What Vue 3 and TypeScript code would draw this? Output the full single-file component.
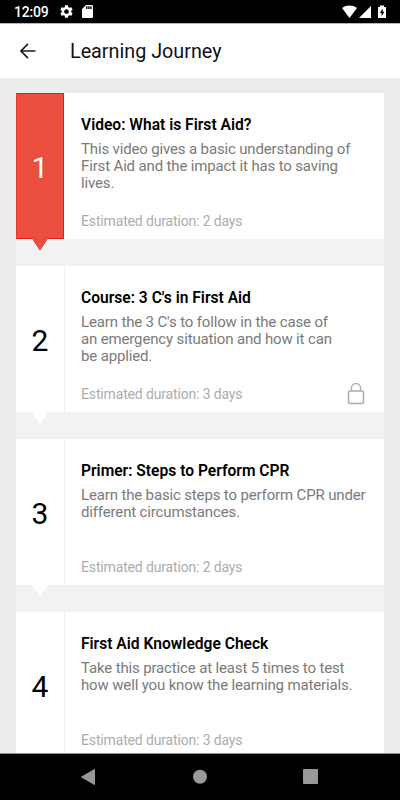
<script setup lang="ts">
interface Step {
  id: number
  title: string
  lines: string[]
  days: number
  active?: boolean
  locked?: boolean
}

const steps: Step[] = [
  {
    id: 1,
    title: 'Video: What is First Aid?',
    lines: ['This video gives a basic understanding of', 'First Aid and the impact it has to saving', 'lives.'],
    days: 2,
    active: true,
  },
  {
    id: 2,
    title: "Course: 3 C's in First Aid",
    lines: ["Learn the 3 C's to follow in the case of", 'an emergency situation and how it can', 'be applied.'],
    days: 3,
    locked: true,
  },
  {
    id: 3,
    title: 'Primer: Steps to Perform CPR',
    lines: ['Learn the basic steps to perform CPR under', 'different circumstances.'],
    days: 2,
  },
  {
    id: 4,
    title: 'First Aid Knowledge Check',
    lines: ['Take this practice at least 5 times to test', 'how well you know the learning materials.'],
    days: 3,
  },
]
</script>

<template>
  <div class="screen">
    <div class="status">
      <span class="clock">12:09</span>
      <svg class="gear" viewBox="2 2 20 20" width="13" height="13">
        <path fill="#fff" d="M19.14 12.94c.04-.3.06-.61.06-.94 0-.32-.02-.64-.07-.94l2.03-1.58c.18-.14.23-.41.12-.61l-1.92-3.32c-.12-.22-.37-.29-.59-.22l-2.39.96c-.5-.38-1.03-.7-1.62-.94l-.36-2.54c-.04-.24-.24-.41-.48-.41h-3.84c-.24 0-.43.17-.47.41l-.36 2.54c-.59.24-1.13.57-1.62.94l-2.39-.96c-.22-.08-.47 0-.59.22L2.74 8.87c-.12.21-.08.47.12.61l2.03 1.58c-.05.3-.09.63-.09.94s.02.64.07.94l-2.03 1.58c-.18.14-.23.41-.12.61l1.92 3.32c.12.22.37.29.59.22l2.39-.96c.5.38 1.03.7 1.62.94l.36 2.54c.05.24.24.41.48.41h3.84c.24 0 .44-.17.47-.41l.36-2.54c.59-.24 1.13-.56 1.62-.94l2.39.96c.22.08.47 0 .59-.22l1.92-3.32c.12-.22.07-.47-.12-.61l-2.01-1.58zM12 15.6c-1.98 0-3.6-1.62-3.6-3.6s1.62-3.6 3.6-3.6 3.6 1.62 3.6 3.6-1.62 3.6-3.6 3.6z" />
      </svg>
      <svg class="sd" viewBox="4 2 16 20" width="11" height="13" preserveAspectRatio="none">
        <path fill="#fff" d="M18 2h-8L4.02 8 4 20c0 1.1.9 2 2 2h12c1.1 0 2-.9 2-2V4c0-1.1-.9-2-2-2zm-6 6h-2V4h2v4zm3 0h-2V4h2v4zm3 0h-2V4h2v4z" />
      </svg>
      <svg class="signals" viewBox="0 0 44 14" width="44" height="14">
        <path fill="#fff" d="M0 3C4.2-.3 10.800-.3 15 3L7.500 13z" />
        <path fill="#fff" d="M29 1v12H17z" />
        <path fill="#fff" d="M36 2h2V.5h4V2h2v11h-8z" />
        <path fill="#000" d="M40.7 3.500 37.900 8h1.700v3.200L42.400 6.800h-1.700z" />
      </svg>
    </div>

    <header class="bar">
      <svg class="back" viewBox="0 0 16 16" width="16" height="16" fill="none" stroke="#1b1b24" stroke-width="1.6">
        <path d="M15.500 8H1.200M8 .9 1 8l7 7.100" />
      </svg>
      <h1>Learning Journey</h1>
    </header>

    <main class="page">
      <div class="list">
        <article v-for="step in steps" :key="step.id" class="card" :class="{ active: step.active }">
          <div class="number">
            <span>{{ step.id }}</span>
            <svg class="pointer" viewBox="0 0 16 13" width="16" height="13">
              <path class="pointer-fill" d="M0 0h16L8 12z" />
              <path class="pointer-edge" d="M.5.5 8 12 15.500.5" />
            </svg>
          </div>
          <div class="body">
            <h2>{{ step.title }}</h2>
            <p class="desc">
              <span v-for="line in step.lines" :key="line">{{ line }}</span>
            </p>
            <div class="foot">
              <span>Estimated duration: {{ step.days }} days</span>
              <svg v-if="step.locked" class="lock" viewBox="0 0 18 22" width="18" height="22" fill="none" stroke="#adadad" stroke-width="1.5">
                <rect x="1.500" y="8" width="15" height="12.500" rx="1" />
                <path d="M4.400 8V5.200a4.600 4.600 0 0 1 9.200 0v2.800" />
              </svg>
            </div>
          </div>
        </article>
      </div>
    </main>

    <nav class="nav">
      <svg viewBox="0 0 400 46" width="400" height="46" fill="#999">
        <path d="M94.500 15.500v15L81.500 23z" stroke="#999" stroke-linejoin="round" />
        <circle cx="200" cy="22.700" r="7" />
        <rect x="303" y="15" width="15" height="15" rx="1" />
      </svg>
    </nav>
  </div>
</template>

<style>
body {
  margin: 0;
  overflow: hidden;
}
</style>

<style scoped>
.screen {
  width: 400px;
  height: 800px;
  display: flex;
  flex-direction: column;
  overflow: hidden;
  font-family: Roboto, sans-serif;
  background: #ededed;
}
.status {
  box-sizing: border-box;
  flex: 0 0 24px;
  display: flex;
  align-items: center;
  padding: 0 8px 0 14px;
  background: #000;
  border-bottom: 1px solid #b5b5b5;
}
.clock {
  width: 45.5px;
  color: #fff;
  font-size: 14px;
  font-weight: 500;
  letter-spacing: -0.2px;
  line-height: 20px;
  padding-top: 1px;
}
.sd {
  margin-left: 9px;
}
.signals {
  margin-left: auto;
  margin-right: 6px;
}
.bar {
  box-sizing: border-box;
  flex: 0 0 54px;
  display: flex;
  align-items: center;
  padding-left: 19.5px;
  background: #fff;
}
.back {
  margin-right: 34.5px;
}
h1 {
  margin: 1px 0 0;
  font-size: 19.75px;
  line-height: 24px;
  font-weight: 400;
  color: #10101c;
}
.page {
  flex: 1;
  min-height: 0;
  overflow: hidden;
  padding: 15.4px 16px 0;
}
.list {
  display: flex;
  flex-direction: column;
  gap: 27px;
  background: #f2f2f2;
}
.card {
  flex: 0 0 146px;
  display: flex;
  background: #fff;
}
.number {
  box-sizing: border-box;
  position: relative;
  flex: 0 0 49px;
  display: flex;
  align-items: center;
  justify-content: center;
  border-right: 1px solid #f0f0f0;
  font-size: 30px;
  color: #000;
}
.number span {
  padding-top: 3px;
}
.active .number {
  flex-basis: 48px;
  margin-right: 1px;
  border: 1px solid #df1d16;
  border-left-color: #e53a2e;
  background: #ea4f40;
  color: #fff;
}
.pointer {
  position: absolute;
  left: 16px;
  top: 100%;
}
.active .pointer {
  left: 15px;
}
.pointer-fill {
  fill: #fff;
}
.pointer-edge {
  fill: none;
}
.active .pointer-fill {
  fill: #ea4f40;
}
.active .pointer-edge {
  stroke: #df1d16;
  stroke-width: 0.8;
}
.body {
  flex: 1;
  display: flex;
  flex-direction: column;
  padding: 21.6px 16px 0;
}
h2 {
  margin: 0;
  font-size: 15.6px;
  line-height: 20px;
  font-weight: 600;
  color: #000;
}
.desc {
  height: 72.4px;
  margin: 5.6px 0 0;
  font-size: 15px;
  letter-spacing: -0.15px;
  line-height: 17.2px;
  color: #7a7a7a;
}
.desc span {
  display: block;
  white-space: nowrap;
}
.foot {
  display: flex;
  justify-content: space-between;
  align-items: center;
  height: 16px;
  font-size: 14px;
  letter-spacing: -0.15px;
  color: #acacac;
}
.lock {
  margin-right: 3px;
}
.nav {
  flex: 0 0 46px;
  border-top: 1px solid #8f8f8f;
  background: #000;
}
.nav svg {
  display: block;
}
</style>
